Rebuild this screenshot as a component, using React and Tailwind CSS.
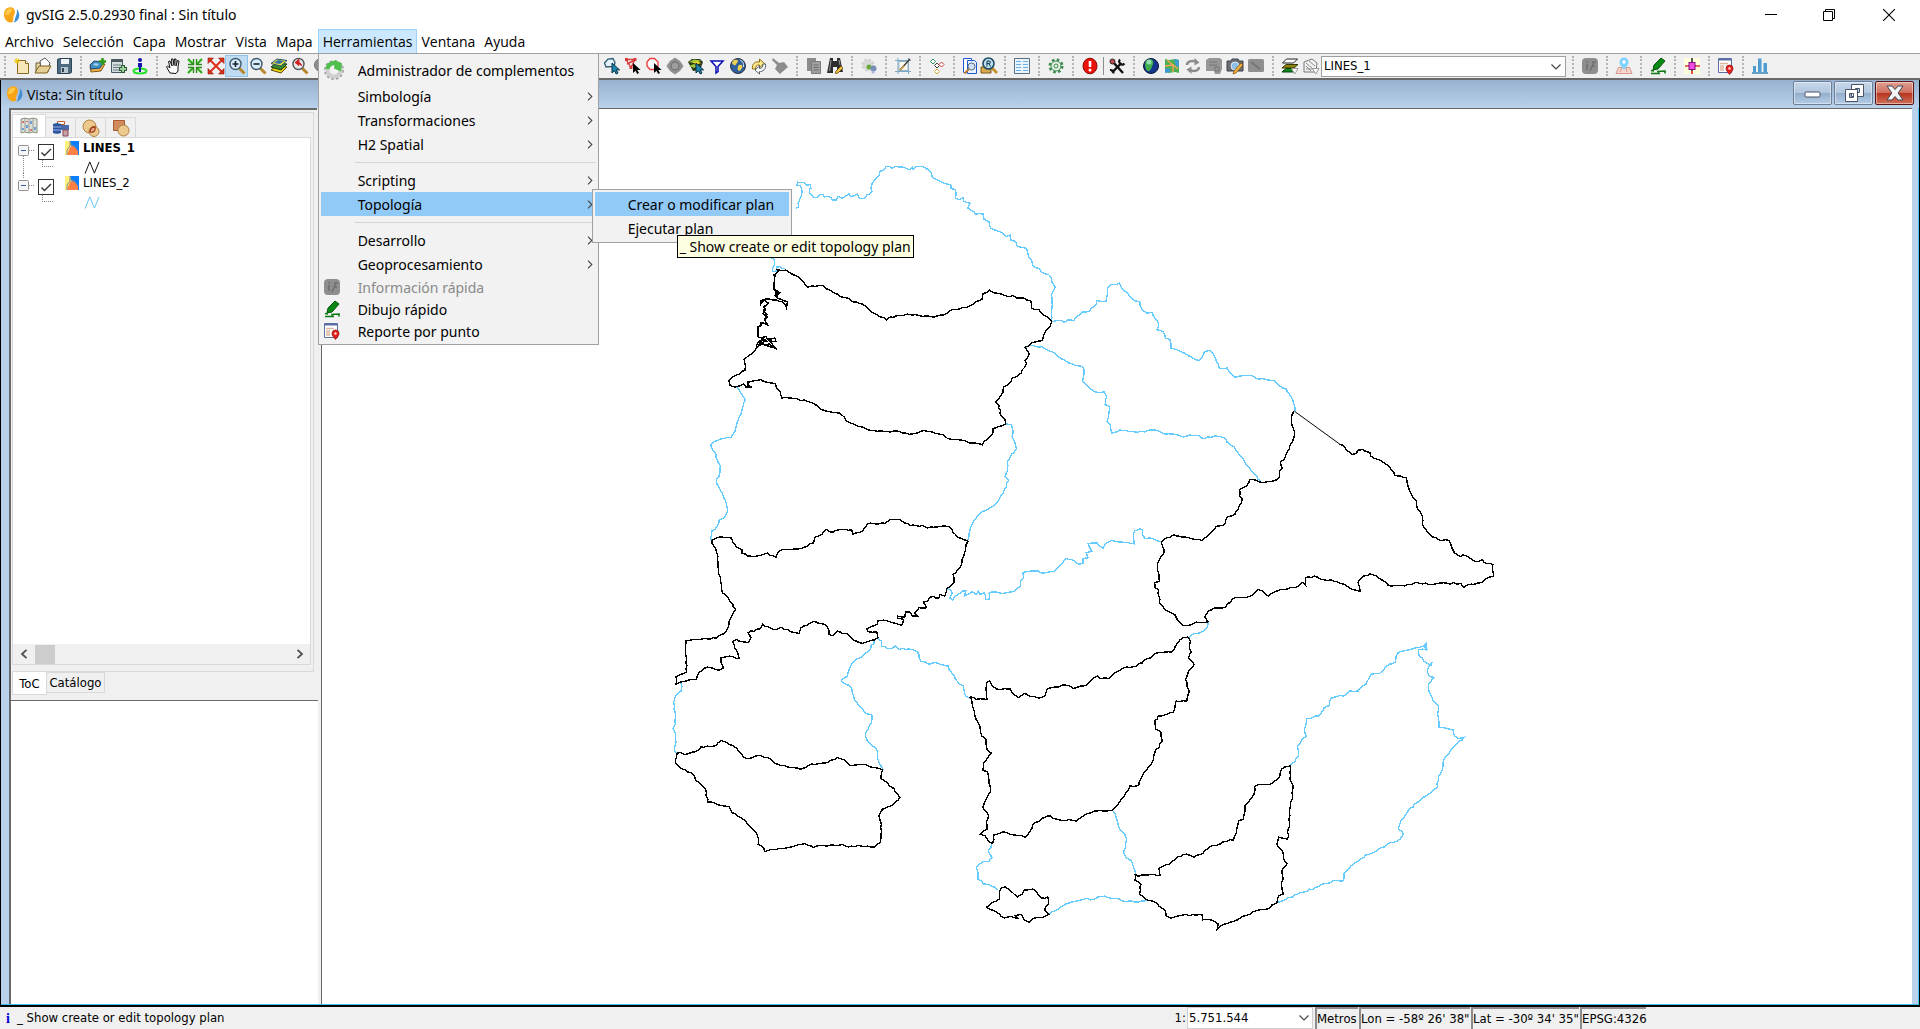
import React from "react";

/* ---------- toolbar icons, drawn on an 18 x 18 grid ---------- */

const Ico = ({ children, className = "h-[18px] w-[18px]", box = "0 0 18 18" }) => (
  <svg viewBox={box} className={className} fill="none" aria-hidden="true">
    {children}
  </svg>
);

const cursor = "M9 6v10l2.500-2.300 1.700 3.300 1.800-1-1.700-3.100h3.300z";

const icons = {
  newDoc: (
    <Ico>
      <path d="M4.500 3.500h8l3 3v10h-11z" fill="#f7e7b8" stroke="#8a6a20" />
      <path d="M12.500 3.500v3h3" stroke="#8a6a20" fill="#fff" />
      <path d="M4 1v6M1 4h6M2 2l4 4M6 2L2 6" stroke="#f0c800" />
    </Ico>
  ),
  open: (
    <Ico>
      <path d="M2 6h5l1-2 6 .5V15H2z" fill="#e8d8a8" stroke="#6b5a30" />
      <path d="M6 4l5-3 5 5-2 6H7z" fill="#fff" stroke="#555" />
      <path d="M1 16l4-7h12l-4 7z" fill="#e6cf92" stroke="#7a6224" />
    </Ico>
  ),
  save: (
    <Ico>
      <path d="M2.500 2.500l2-1h12v14l-2 1h-12z" fill="#4d6b80" stroke="#2c4454" />
      <path d="M6 2h8v5H6z" fill="#eef3f7" />
      <path d="M6 10h7v6H6z" fill="#b8c6d0" />
      <path d="M7 11h2v4H7z" fill="#2c4454" />
    </Ico>
  ),
  addLayer: (
    <Ico>
      <path d="M1 10l4-4 11 1-4 7-10 1z" fill="#e9b04c" stroke="#8a5a10" />
      <path d="M1 8l4-4 10 1-4 6-9 1z" fill="#3f8fc4" stroke="#1c4a78" />
      <path d="M4 8l2-2 4 1-2 2z" fill="#9fd0ee" />
      <path d="M13.500 1v7M10 4.500h7" stroke="#2e9a1c" strokeWidth="2.500" />
    </Ico>
  ),
  addTable: (
    <Ico>
      <path d="M1.500 2.500h11v13h-11z" fill="#d5dde0" stroke="#4a5a60" />
      <path d="M1.500 3.500h11" stroke="#4a5a60" strokeWidth="3" />
      <path d="M3 8h8M3 10.500h8M3 13h8" stroke="#6a7a80" />
      <path d="M13 8v8M9 12h8" stroke="#2c5c34" strokeWidth="4" />
      <path d="M13 9v6M10 12h6" stroke="#9ccf9c" strokeWidth="2" />
    </Ico>
  ),
  locate: (
    <Ico>
      <ellipse cx="9" cy="14" rx="6.500" ry="2.500" stroke="#2be02b" strokeWidth="2" />
      <circle cx="9" cy="3" r="2" fill="#1414a8" />
      <path d="M7 6h4v4h-1v5H8v-5H7z" fill="#1414a8" />
    </Ico>
  ),
  hand: (
    <Ico>
      <path
        d="M5 16l-3.500-6 1-1 2.500 2L3.500 4.500l1.500-.5 2 5-.5-7H8l1 6.500L9.500 2H11v7l1.500-5.500 1.500.5-1 6v4l-2 2.500z"
        fill="#fff"
        stroke="#111"
      />
    </Ico>
  ),
  shrink: (
    <Ico>
      <path d="M2 2l5 5M16 2l-5 5M2 16l5-5M16 16l-5-5" stroke="#2fae1c" strokeWidth="2.200" />
      <path d="M2 7.500h5.500V2M16 7.500h-5.500V2M2 10.500h5.500V16M16 10.500h-5.500V16" stroke="#2a8a1c" strokeWidth="1.400" />
    </Ico>
  ),
  expand: (
    <Ico>
      <path d="M3 3l12 12M15 3L3 15" stroke="#e0301c" strokeWidth="2" />
      <path d="M1 1h5.500L1 6.500zM17 1v5.500L11.500 1zM1 17v-5.500L6.500 17zM17 17h-5.500l5.500-5.500z" fill="#e0301c" stroke="#8a1c10" strokeWidth=".6" />
    </Ico>
  ),
  zoomIn: (
    <Ico>
      <path d="M11 11l5.500 5.500" stroke="#b8862c" strokeWidth="3" />
      <circle cx="7.500" cy="7" r="5.500" fill="#d8ecfa" stroke="#3f5a6e" strokeWidth="1.400" />
      <path d="M7.500 4v6M4.500 7h6" stroke="#123" strokeWidth="1.600" />
    </Ico>
  ),
  zoomOut: (
    <Ico>
      <path d="M11 11l5.500 5.500" stroke="#b8862c" strokeWidth="3" />
      <circle cx="7.500" cy="7" r="5.500" fill="#d8ecfa" stroke="#3f5a6e" strokeWidth="1.400" />
      <path d="M4.500 7h6" stroke="#123" strokeWidth="1.600" />
    </Ico>
  ),
  layers: (
    <Ico>
      <path d="M1 13l5-4 11 1-6 6z" fill="#f0d21c" stroke="#5a4a00" />
      <path d="M1 10l5-4 11 1-6 6z" fill="#3a8a2c" stroke="#12400a" />
      <path d="M1 6.500L7 2l10 1.500-6 5.500z" fill="#f4e23c" stroke="#25506a" />
      <path d="M4 6l4-3 6 1-4 3z" fill="#2f70a8" />
    </Ico>
  ),
  zoomPrev: (
    <Ico>
      <path d="M11 11l5.500 5.500" stroke="#b8862c" strokeWidth="3" />
      <circle cx="7.500" cy="7" r="5.500" fill="#e6e9ec" stroke="#555" strokeWidth="1.400" />
      <path d="M10.500 9c0-3-2-3.500-4-3.500M8 2.500l-4 3 4 3z" stroke="#d02020" fill="#d02020" />
    </Ico>
  ),
  grayBall: (
    <Ico>
      <circle cx="9" cy="8" r="6.500" fill="#8d8d8d" stroke="#777" />
    </Ico>
  ),
  pickBlue: (
    <Ico>
      <path d="M3 10L1.500 6 5 2l5-.5 2 4-1 4z" fill="#e4f2fb" stroke="#2d5a73" strokeWidth="1.300" />
      <path d={cursor} fill="#1b87b5" stroke="#0c2e40" />
    </Ico>
  ),
  pickPoly: (
    <Ico>
      <path d="M2 2.500h9M2 2.500l5 8 4-8M11 3l-8 4" stroke="#d93a3a" strokeWidth="1.400" />
      <path d="M1 1h3v3H1zM9.500 1h3v3h-3zM5.500 9h3v3h-3z" fill="#d93a3a" />
      <path d={cursor} fill="#000" />
    </Ico>
  ),
  pickCircle: (
    <Ico>
      <path d="M5 1.500h4.500L13 5v4l-3 3.500H5L2 9V5z" fill="#fff" stroke="#f04040" strokeWidth="1.400" />
      <path d={cursor} fill="#000" />
    </Ico>
  ),
  diamond: (
    <Ico>
      <path d="M9 .5l5 3.500 3.500 5-3.500 5-5 3.500L4 14 .5 9 4 4z" fill="#8f8f8f" />
      <circle cx="9" cy="9" r="4" stroke="#6f6f6f" fill="#9f9f9f" />
    </Ico>
  ),
  pickLayers: (
    <Ico>
      <path d="M1 5l4-3h8l3 3-3 8-7 1z" fill="#2c3a18" />
      <path d="M2 5l5-2.500 7 1-5 3zM2 9l5-2 4 2-4 2z" fill="#9ac83a" />
      <path d="M6 5.500l4-1.500 4 2-4 1.500z" fill="#f0d21c" />
      <path d={cursor} fill="#1b87b5" stroke="#0c2e40" />
    </Ico>
  ),
  filter: (
    <Ico>
      <path d="M3 4h12l-5 5.500v5L8 16V9.500z" fill="#fff" stroke="#0a0ab8" strokeWidth="1.500" />
    </Ico>
  ),
  globe: (
    <Ico>
      <circle cx="9" cy="9" r="7.500" fill="#2f5f9c" stroke="#2d3440" />
      <path d="M5 3c4-1 5 1 3 3s-1 3-3 2-3-2 0-5zM10 8c3-1 4 1 3 3s-3 4-4 2 0-4 1-5z" fill="#f0d050" />
      <path d="M11 3c3 1 4 4 3.500 7" stroke="#cfe2f5" />
    </Ico>
  ),
  refreshYellow: (
    <Ico>
      <path d="M2.500 12c-1-5 3-8 7-7V2l5 4.500-5 4V8c-2.500-.5-4 1-4 4z" fill="#ffe98a" stroke="#8a6a10" />
      <path d="M15.500 7c1 5-3 8-6 7.500V17L5 13l4.500-4v2.500c2 .3 3.500-1.500 3.500-4.500z" fill="#fff" stroke="#55606a" />
    </Ico>
  ),
  broom: (
    <Ico>
      <path d="M2 1l6 5 5-1 4 5-8 7-5-5 2-4-5-5z" fill="#8d8d8d" />
    </Ico>
  ),
  copyGray: (
    <Ico>
      <path d="M2 1h9v13H2z" fill="#8c8c8c" />
      <path d="M6.500 4.500h9v12h-9z" fill="#a0a0a0" stroke="#7a7a7a" />
      <path d="M8.500 8h5M8.500 10.500h5M8.500 13h5" stroke="#6c6c6c" />
    </Ico>
  ),
  binoculars: (
    <Ico>
      <path d="M4 1h3v3h4V1h3l3 14h-6V10H7v6H1z" fill="#2d2d2d" />
      <path d="M5 3L3.500 14M13 3l1 5" stroke="#9c9c9c" />
      <path d="M15 9l2 2-5 5-2.500.5.5-2.500z" fill="#f0c040" stroke="#5a3a00" strokeWidth=".7" />
    </Ico>
  ),
  gearsPale: (
    <Ico>
      <circle cx="8" cy="8" r="5" stroke="#d0d2d0" strokeWidth="3" strokeDasharray="2.500 1.400" fill="#dadcda" />
      <circle cx="9" cy="10" r="2.500" fill="#6aa83a" />
      <circle cx="13.500" cy="11.500" r="3" fill="#7a8db8" />
      <circle cx="13" cy="15" r="1.500" fill="#a8b8d8" />
    </Ico>
  ),
  editBox: (
    <Ico>
      <path d="M4 1v16M14.500 1v16M1 3.500h16M1 14.500h16" stroke="#7ea8c4" />
      <path d="M5 4.500h9v9H5z" fill="#fdf8ec" stroke="#8fb4cc" />
      <path d="M6 13L16 2" stroke="#3a3220" strokeWidth="1.200" />
      <path d="M6 13l4-4" stroke="#c89a3c" strokeWidth="1.400" />
    </Ico>
  ),
  diamonds: (
    <Ico>
      <g strokeWidth="1" fill="#fff">
        <path d="M5 2l2.500 2.500L5 7 2.500 4.500z" stroke="#2f8f5a" />
        <path d="M9 6l2.500 2.500L9 11 6.500 8.500z" stroke="#444" />
        <path d="M13.500 5l2.500 2.500-2.500 2.500L11 7.500z" stroke="#d04040" />
        <path d="M9 12l2.500 2.500L9 17l-2.500-2.500z" stroke="#d8a830" />
      </g>
    </Ico>
  ),
  docZoom: (
    <Ico>
      <path d="M2.500 1.500h8v14h-8z" fill="#fff" stroke="#1c5ad0" />
      <path d="M6.500 3.500h7l2 2v11h-9z" fill="#e8f0ff" stroke="#1c5ad0" />
      <circle cx="10.500" cy="9.500" r="3.500" fill="#cfe2fa" stroke="#5a6a80" />
      <path d="M8 12l-4.500 4.500" stroke="#c07a2c" strokeWidth="2" />
    </Ico>
  ),
  zoomR: (
    <Ico>
      <path d="M1 10h10v6H1z" fill="#d8a84c" stroke="#7a5a1c" />
      <path d="M12 11l5 5" stroke="#c8922c" strokeWidth="3" />
      <circle cx="8.500" cy="6.500" r="5.500" fill="#bfe0f2" stroke="#1d4a60" strokeWidth="1.600" />
      <path d="M7 9.500V4h2c2 0 2 2.500 0 2.500H7M9 6.500l1.500 3" stroke="#0c3448" />
    </Ico>
  ),
  table: (
    <Ico>
      <path d="M1.500 1.500h15v15h-15z" fill="#eaf4fd" stroke="#5a7080" />
      <path d="M3 4.500h5M3 7.500h5M3 10.500h5M3 13.500h5M10 4.500h5M10 7.500h5M10 10.500h5M10 13.500h5" stroke="#6ab0e8" />
    </Ico>
  ),
  gearGreen: (
    <Ico>
      <circle cx="9" cy="9" r="6.300" stroke="#3d8a4c" strokeWidth="2.400" strokeDasharray="2.600 2.350" />
      <circle cx="9" cy="9" r="5" stroke="#3d8a4c" fill="#e3f0e3" />
      <circle cx="9" cy="9" r="2" stroke="#3d8a4c" />
    </Ico>
  ),
  alert: (
    <Ico>
      <ellipse cx="9" cy="9" rx="7" ry="7.800" fill="#e8140c" stroke="#8c0a06" />
      <path d="M9 4v6" stroke="#fff" strokeWidth="2.600" />
      <circle cx="9" cy="13" r="1.500" fill="#fff" />
    </Ico>
  ),
  tools: (
    <Ico>
      <path d="M5 5l10 11" stroke="#111" strokeWidth="2.400" />
      <path d="M13.500 6L4 15.500" stroke="#111" strokeWidth="2.400" />
      <path d="M12 2.500a3 3 0 0 0 4.500 4M2 13a3 3 0 0 1 3.500 3.500" stroke="#111" strokeWidth="2" />
      <circle cx="4.500" cy="4.500" r="2.500" fill="#c04848" stroke="#222" />
    </Ico>
  ),
  earth: (
    <Ico>
      <circle cx="9" cy="9" r="7.500" fill="#16358c" stroke="#0a1638" />
      <path d="M5 3c5-2 7 1 6 4s-2 6-4 7-4-3-4-6 1-4 2-5z" fill="#3fae4c" />
      <circle cx="7" cy="5" r="2.500" fill="#a8e8c8" opacity=".8" />
    </Ico>
  ),
  mapTile: (
    <Ico>
      <path d="M2 2l4 1 6-1 4 1v13l-4-1-6 1-4-1z" fill="#4cae54" />
      <path d="M11 2l5 1v7l-3-1zM2 11l5 1v3l-5 1z" fill="#3c9cd0" />
      <path d="M4 3l6 5v7M2 9l8-1 5 4" stroke="#f5a75a" strokeWidth="1.400" />
    </Ico>
  ),
  syncGray: (
    <Ico>
      <path d="M3 8c0-3.500 5-5 9-3M15 10c0 3.500-5 5-9 3" stroke="#8c8c8c" strokeWidth="2.400" />
      <path d="M10.500 1l5 4.500-5 3zM7.500 17l-5-4.500 5-3z" fill="#8c8c8c" />
    </Ico>
  ),
  dbGray: (
    <Ico>
      <path d="M1 3l3-2h11l2 2v9l-2 5h-5l-1-3H1z" fill="#979797" />
      <path d="M4 5h8M4 8h8M10 10h4v4h-4z" stroke="#777" />
    </Ico>
  ),
  camera: (
    <Ico>
      <path d="M1 4h4l1-2h6l1 2h4v10H1z" fill="#6a6e74" stroke="#3c4046" />
      <circle cx="9" cy="9" r="4" fill="#8cc0ea" stroke="#dfe6ec" />
      <path d="M15 6l2 2-7 8-3 1 1-3z" fill="#f2b03c" stroke="#7a4a08" strokeWidth=".7" />
    </Ico>
  ),
  screenGray: (
    <Ico>
      <rect x="1" y="2" width="16" height="13" rx="1.500" fill="#8f8f8f" />
      <path d="M4 5l9 7" stroke="#757575" strokeWidth="2" />
    </Ico>
  ),
  stack: (
    <Ico>
      <path d="M1 15l4-3.500h12L13 15z" fill="#0a8c1c" stroke="#053a0a" />
      <path d="M1 11l4-3.500h12L13 11z" fill="#8c8414" stroke="#3a3600" />
      <path d="M1.500 6l4-4h11l-4 4z" fill="#fff" stroke="#222" />
      <path d="M10.500 11.500h6.500l-3.300 5.500z" fill="#fff" stroke="#999" />
    </Ico>
  ),
  tagList: (
    <Ico>
      <path d="M2 5l8-3 5 4-1 9H2z" fill="#f2f2f2" stroke="#777" />
      <path d="M4 6l6 5M7 4l6 5M4 9l5 5M4 12h7" stroke="#8c8c8c" />
      <path d="M10.500 11.500h6.500l-3.300 5.500z" fill="#fff" stroke="#999" />
    </Ico>
  ),
  infoGray: (
    <Ico>
      <rect x="1" y="1" width="16" height="16" rx="4" fill="#8e8e8e" />
      <path d="M6 7v6M6 4v1.500M9 14l4-9M11 5h4M11 9h3" stroke="#707070" strokeWidth="1.600" />
    </Ico>
  ),
  pin: (
    <Ico>
      <path d="M1 16.500l2.500-6h11l2.500 6z" fill="#f6d8d0" stroke="#d8968c" />
      <path d="M5 15l2-4M12 15l-1-4" stroke="#d8968c" />
      <path d="M9 13C6 9 4.500 7.500 4.500 5a4.500 4.500 0 0 1 9 0C13.500 7.500 12 9 9 13z" fill="#7fd4fb" />
      <circle cx="9" cy="5" r="1.800" fill="#fff" />
    </Ico>
  ),
  pen: (
    <Ico>
      <path d="M12 1l4 3-7 8-5 1 1-5z" fill="#0a8a14" stroke="#045408" />
      <path d="M2 13.500l3 .5M2 16.500h8l-1-2 7-.5v2.500" stroke="#0a7a14" strokeWidth="1.600" />
    </Ico>
  ),
  target: (
    <Ico>
      <path d="M1 1h16v16H1z" fill="#ffffdc" />
      <path d="M9 1v13M2 9h14" stroke="#111" strokeWidth="1.400" />
      <path d="M2 9h4M12.500 9H17" stroke="#e06a6a" strokeWidth="2" />
      <path d="M9 14v3" stroke="#e02020" strokeWidth="1.600" />
      <rect x="6" y="5.500" width="6" height="7" fill="#f050e0" stroke="#8c0a80" />
    </Ico>
  ),
  report: (
    <Ico>
      <path d="M1.500 1.500h13v14h-13z" fill="#fff" stroke="#5a6ea8" />
      <path d="M2 2.500h12" stroke="#5a6ea8" strokeWidth="2" />
      <path d="M3 6.500h8M3 9h4M3 11h4M3 13h4" stroke="#dcb8a0" strokeWidth="1.400" />
      <path d="M12.500 17.500c-2.500-3-3.500-4.500-3.500-6a3.500 3.500 0 0 1 7 0c0 1.500-1 3-3.500 6z" fill="#e8201c" stroke="#7a0c0a" strokeWidth=".7" />
      <circle cx="12.500" cy="11.500" r="1.200" fill="#ffd8d0" />
    </Ico>
  ),
  bars: (
    <Ico>
      <path d="M2 9h3v6H2zM7 1.500h3.500V15H7zM12.500 6H16v9h-3.500z" fill="#4f9cd0" />
      <path d="M1 16h16" stroke="#3a86bc" strokeWidth="1.500" />
    </Ico>
  ),
};

const toolGroups = [
  { tools: ["newDoc", "open", "save"] },
  { tools: ["addLayer", "addTable", "locate"] },
  { tools: ["hand", "shrink", "expand", "zoomIn", "zoomOut", "layers", "zoomPrev", "grayBall", "globe"], active: "zoomIn" },
  { tools: ["zoomR", "docZoom", "table"] },
  { tools: ["layers", "copyGray"] },
  {
    tools: [
      "pin", "mapTile", "editBox", "camera", "pickCircle",
      "pickBlue", "pickPoly", "pickCircle", "diamond", "pickLayers", "filter", "globe", "refreshYellow", "broom",
    ],
  },
  { tools: ["copyGray", "binoculars"] },
  { tools: ["gearsPale"] },
  { tools: ["editBox"] },
  { tools: ["diamonds"] },
  { tools: ["docZoom", "zoomR"], tight: true },
  { tools: ["table"] },
  { tools: ["gearGreen"] },
  { tools: ["alert", "|", "tools"] },
  { tools: ["earth", "mapTile", "syncGray", "dbGray", "camera", "screenGray"] },
  { tools: ["stack", "tagList"], combo: true },
  { tools: ["infoGray"] },
  { tools: ["pin"] },
  { tools: ["pen"] },
  { tools: ["target"] },
  { tools: ["report"] },
  { tools: ["bars"] },
];

const Chevron = ({ className }) => (
  <svg viewBox="0 0 10 6" className={className} fill="none" aria-hidden="true">
    <path d="M.5.5L5 5l4.500-4.500" stroke="#444" strokeWidth="1.200" />
  </svg>
);

function Toolbar() {
  return (
    <div className="-ml-0.5 flex h-[27px] shrink-0 items-center border-t border-b-2 border-t-[#a0a0a0] border-b-[#696969] bg-[#f0f0f0]">
      {toolGroups.map((g, i) => (
        <div key={i} className="flex h-full shrink-0 items-center">
          <span className="flex w-[13px] justify-center">
            <span className="h-[20px] border-l-2 border-dotted border-[#b4b4b4]" />
          </span>
          {g.tools.map((t, j) =>
            t === "|" ? (
              <span key={j} className="flex w-[6px] justify-center">
                <span className="h-[18px] border-l border-[#8c8c8c]" />
              </span>
            ) : (
              <button
                key={j}
                type="button"
                aria-label={t}
                className={
                  "flex h-[20px] items-center justify-center " +
                  (g.tight ? "w-[19px] " : "w-[21px] ") +
                  (g.active === t ? "bg-[#bfdcf3] outline outline-[#8fc3ee]" : "")
                }
              >
                {icons[t]}
              </button>
            )
          )}
          {g.combo && (
            <div className="relative">
              <select
                aria-label="Capa activa"
                className="block h-[21px] w-[245px] appearance-none border border-[#a0a0a0] bg-white pl-0.5 font-['DejaVu_Sans_Condensed','DejaVu_Sans',sans-serif] text-[13px] leading-[18px] text-black"
              >
                <option>LINES_1</option>
                <option>LINES_2</option>
              </select>
              <Chevron className="pointer-events-none absolute top-[8px] right-[5px] h-[6px] w-[10px]" />
            </div>
          )}
        </div>
      ))}
    </div>
  );
}

/* ---------- application logo ---------- */

const Logo = () => (
  <Ico className="h-[18px] w-[18px] shrink-0">
    <path d="M9 1.500C4 .5 1 4 1 8.500S4 17 8.500 16.500c3-1 1-3.500 2-6s2-4 1-6.500c-.5-1.500-1.500-2.200-2.500-2.500z" fill="#f7a516" />
    <path d="M6 2.500C3.500 3.500 2 6 2.300 9c3 .5 6-1.500 7-6.200z" fill="#ffc84a" />
    <path d="M13.500 3c2.500 2 3.500 5.500 2.500 8.500s-3 4.500-5.500 5c2-2 1.200-3.500 2-5.500.8-2.300 2.200-4.500 1-8z" fill="#3f8fd8" />
  </Ico>
);

/* ---------- menus ---------- */

const menuNames = ["Archivo", "Selección", "Capa", "Mostrar", "Vista", "Mapa", "Herramientas", "Ventana", "Ayuda"];

const GearBig = () => (
  <svg viewBox="0 0 22 22" className="h-[22px] w-[22px]" fill="none" aria-hidden="true">
    <circle cx="11" cy="11" r="8.500" stroke="#a4a4a4" strokeWidth="3" strokeDasharray="2.600 1.850" />
    <circle cx="11" cy="11" r="6.500" stroke="#cfcfcf" strokeWidth="4" />
    <path d="M4.500 10a6.500 6.500 0 0 1 9-5.500" stroke="#4fc04a" strokeWidth="4" />
    <path d="M12 1l7 3.500-1 8-7-3z" fill="#4fc04a" />
  </svg>
);

const toolsMenu = [
  { label: "Administrador de complementos", icon: <GearBig />, size: "h-[28px]" },
  { label: "Simbología", sub: true },
  { label: "Transformaciones", sub: true },
  { label: "H2 Spatial", sub: true },
  null,
  { label: "Scripting", sub: true },
  { label: "Topología", sub: true, open: true },
  null,
  { label: "Desarrollo", sub: true },
  { label: "Geoprocesamiento", sub: true },
  { label: "Información rápida", icon: icons.infoGray, size: "h-[22px]", disabled: true },
  { label: "Dibujo rápido", icon: icons.pen, size: "h-[22px]" },
  { label: "Reporte por punto", icon: icons.report, size: "h-[22px]" },
];

function SubMenu() {
  return (
    <div className="absolute top-[-3px] left-[271px] z-20 w-[200px] border border-[#a0a0a0] bg-[#f2f2f2] p-0.5">
      <button type="button" className="flex h-[24px] w-full items-center bg-[#91c9f7] pl-[33px]">
        Crear o modificar plan
      </button>
      <button type="button" className="flex h-[24px] w-full items-center pl-[33px]">
        Ejecutar plan
      </button>
      <div
        role="tooltip"
        className="absolute top-[45px] left-[84px] flex h-[23px] items-center border border-black bg-[#ffffe1] px-0.5 whitespace-nowrap"
      >
        _ Show create or edit topology plan
      </div>
    </div>
  );
}

function ToolsMenu() {
  return (
    <div className="absolute top-full left-0 z-10 w-[281px] border border-[#a0a0a0] bg-[#f2f2f2] p-0.5 text-left font-['Noto_Sans','Open_Sans',sans-serif]">
      {toolsMenu.map((m, i) =>
        m === null ? (
          <div key={i} className="flex h-[12px] items-center pl-[34px]">
            <span className="w-full border-t border-[#d5d5d5]" />
          </div>
        ) : (
          <div key={i} className="relative">
            <button
              type="button"
              disabled={m.disabled}
              className={
                "flex w-full items-center " +
                (m.size || "h-[24px]") +
                (m.open ? " bg-[#91c9f7]" : "") +
                (m.disabled ? " text-[#8a8a8a]" : "")
              }
            >
              <span className="flex w-[37px] shrink-0 pl-0.5">{m.icon}</span>
              <span className="flex-1 text-left">{m.label}</span>
              {m.sub && (
                <svg viewBox="0 0 6 10" className="mr-[3px] h-[9px] w-[6px]" fill="none" aria-hidden="true">
                  <path d="M.8.8L5 5 .8 9.200" stroke="#444" strokeWidth="1.200" />
                </svg>
              )}
            </button>
            {m.open && <SubMenu />}
          </div>
        )
      )}
    </div>
  );
}

function MenuBar() {
  return (
    <nav className="flex h-[24px] shrink-0 bg-white pl-px">
      {menuNames.map((name) => (
        <div key={name} className={name === "Herramientas" ? "relative" : ""}>
          <button
            type="button"
            className={
              "h-[24px] px-1 " +
              (name === "Herramientas" ? "border border-b-0 border-[#99d1ff] bg-[#cce8ff]" : "mr-px")
            }
          >
            {name}
          </button>
          {name === "Herramientas" && <ToolsMenu />}
        </div>
      ))}
    </nav>
  );
}

/* ---------- table of contents ---------- */

const tocTabs = [
  <Ico key="map">
    <path d="M1 2l4-1 4 1 4-1 4 1v14l-4-1-4 1-4-1-4 1z" fill="#dde3d6" stroke="#8a9080" />
    <path d="M5 1v14M9 2v14M13 1v14" stroke="#999" />
    <path d="M3 4v2M11 12v2M7 4v1" stroke="#d05050" strokeWidth="1.500" />
    <path d="M7 8v3M15 10v3M11 4v3M3 11v2" stroke="#4f88d8" strokeWidth="1.500" />
  </Ico>,
  <Ico key="db">
    <path d="M5.500 2.500h7v3h-7z" fill="#fff" stroke="#c05a30" />
    <path d="M1 5c2-1 6-1 8 0v9c-2 1-6 1-8 0z" fill="#2d55a0" />
    <path d="M1 8h8M1 11h8" stroke="#9ab4e0" />
    <path d="M9 6h8v5H9z" fill="#4a6aa8" />
    <path d="M11 11h5v6h-5z" fill="#c8a0a8" stroke="#8a4a5a" />
  </Ico>,
  <Ico key="circles">
    <circle cx="7.500" cy="7.500" r="6.500" fill="#ecc98c" stroke="#b08040" />
    <circle cx="12" cy="12.500" r="5" fill="#ecc98c" stroke="#b08040" />
    <path d="M8 13c0-3 2-5 5-5 1 3-1 6-5 5z" fill="#f0b090" stroke="#a03c1c" strokeWidth="1.300" />
  </Ico>,
  <Ico key="shapes">
    <path d="M1.500 1.500h11v10h-11z" fill="#d08a5c" stroke="#a85a2c" />
    <circle cx="11.500" cy="11.500" r="5.500" fill="#ecc98c" stroke="#b08040" />
  </Ico>,
];

const layers = [
  { name: "LINES_1", stroke: "#000000", active: true },
  { name: "LINES_2", stroke: "#5cc4f8" },
];

function LayerRow({ layer, last }) {
  return (
    <li className="flex h-[35px] pl-px">
      <button type="button" aria-label={"Contraer " + layer.name} className="h-[35px] w-[23px]">
        <svg viewBox="0 0 23 35" className="h-[35px] w-[23px]" fill="none" aria-hidden="true">
          <path d={last ? "M8.500 0v6M14 12.500h6" : "M8.500 18v17M14 12.500h6"} stroke="#888" strokeDasharray="1 1" />
          <rect x="3.500" y="7.500" width="10" height="10" rx="1" fill="#f6f6f6" stroke="#919191" />
          <path d="M6 12.500h5" stroke="#3c5aa8" />
        </svg>
      </button>
      <div className="relative w-[27px] pt-[6px]">
        <input
          type="checkbox"
          id={layer.name}
          defaultChecked
          className="block h-[16px] w-[16px] appearance-none border border-[#333] bg-white"
        />
        <svg viewBox="0 0 16 16" className="pointer-events-none absolute top-[6px] left-0 h-[16px] w-[16px]" fill="none" aria-hidden="true">
          <path d="M3.500 8.500l3 3L13 5" stroke="#333" strokeWidth="1.400" />
        </svg>
        <span className="ml-1 block h-[7px] w-[11px] border-b border-l border-dotted border-[#888]" />
      </div>
      <svg viewBox="0 0 14 14" className="mt-[3px] mr-1 h-[14px] w-[14px]" aria-hidden="true">
        <path d="M0 0h14v14H0z" fill="#fff27a" />
        <path d="M5 0h9v14H9z" fill="#0a80ff" />
        <path d="M5 6l4-1 4 5v4H2z" fill="#ff7f45" />
        <path d="M5 0v5l-3 4v5M5 3l5 3" stroke="#888" fill="none" />
      </svg>
      <div>
        <label
          htmlFor={layer.name}
          className={
            "block h-[20px] font-['DejaVu_Sans_Condensed','DejaVu_Sans',sans-serif] text-[13px] leading-[19px] " +
            (layer.active ? "font-bold" : "")
          }
        >
          {layer.name}
        </label>
        <svg viewBox="0 0 18 14" className="mt-[3px] ml-px h-[13px] w-[18px]" fill="none" aria-hidden="true">
          <path d="M.5 13.500L5.500 1l5 12 5-12" stroke={layer.stroke} />
        </svg>
      </div>
    </li>
  );
}

function SidePanel() {
  return (
    <aside className="flex w-[310px] shrink-0 flex-col bg-[#f0f0f0]">
      <div className="flex h-[589px] w-[306px] flex-col border-t-2 border-[#696969] pt-0.5">
        <div className="ml-px flex min-h-0 w-[302px] flex-1 flex-col border-t border-r border-b border-[#d9d9d9]">
          <div className="flex items-end pt-px">
            {tocTabs.map((t, i) => (
              <button
                key={i}
                type="button"
                aria-label={"Panel " + (i + 1)}
                className={
                  i === 0
                    ? "flex h-[23px] w-[34px] items-center justify-center border border-b-0 border-[#d9d9d9] bg-white"
                    : "flex h-[20px] w-[30px] items-center justify-center border border-l-0 border-b-0 border-[#d9d9d9] bg-[#f0f0f0]"
                }
              >
                {t}
              </button>
            ))}
          </div>
          <div className="mb-[6px] flex w-[299px] flex-1 flex-col border border-[#d9d9d9] bg-white">
            <ul className="flex-1 pl-px">
              {layers.map((l, i) => (
                <LayerRow key={l.name} layer={l} last={i === layers.length - 1} />
              ))}
            </ul>
            <div className="flex h-[20px] items-center bg-[#f0f0f0]">
              <button type="button" aria-label="Izquierda" className="flex w-[22px] justify-center">
                <svg viewBox="0 0 8 10" className="h-[10px] w-[8px]" fill="none">
                  <path d="M6.500.8L2 5l4.500 4.200" stroke="#505050" strokeWidth="1.800" />
                </svg>
              </button>
              <span className="h-[19px] w-[20px] bg-[#cdcdcd]" />
              <span className="flex-1" />
              <button type="button" aria-label="Derecha" className="flex w-[21px] justify-center">
                <svg viewBox="0 0 8 10" className="h-[10px] w-[8px]" fill="none">
                  <path d="M1.500.8L6 5 1.500 9.200" stroke="#505050" strokeWidth="1.800" />
                </svg>
              </button>
            </div>
          </div>
        </div>
        <div className="flex h-[25px] shrink-0 items-start pl-px font-['DejaVu_Sans_Condensed','DejaVu_Sans',sans-serif] text-[13px]">
          <button type="button" className="h-[23px] w-[35px] border border-t-0 border-[#d9d9d9] bg-white pt-[2px]">
            ToC
          </button>
          <button type="button" className="h-[21px] w-[58px] border border-l-0 border-[#d9d9d9]">
            Catálogo
          </button>
        </div>
      </div>
      <div className="mt-[3px] w-[307px] flex-1 border-t border-[#696969] bg-white" />
    </aside>
  );
}

/* ---------- map ---------- */

/* Survey sheets: origin and scale of the digitised coordinates. */
const sheets = {
  nw: [660, 150, 1 / 3, 1 / 3],
  ne: [950, 260, 1 / 2.8, 1 / 3],
  sw: [660, 450, 1 / 3, 1 / 3],
  se: [940, 600, 1 / 2.8, 1 / 3],
};

const water = [
  ["nw", "405,175 413,172 416,150 424,125 419,108 408,105 411,97 430,97 437,106 448,104 450,115 446,118 447,130 460,142 470,142 478,134 488,134 490,141 510,143 514,150 527,150 532,139 543,145 553,140 565,131 570,140 578,138 590,132 596,146 612,145 618,135 634,125 632,105 640,92 655,78 657,65 672,58 675,50 686,49 692,55 703,50 720,51 745,60 755,52 757,58 768,49 782,49 800,58 812,70 815,83 835,92 850,100 872,106 870,115 885,120 885,145 895,150 907,143 910,155 928,160 922,175 940,185 945,193 968,193 970,208 985,215 990,235 1010,243 1025,248 1035,260 1048,256 1050,270 1065,275 1070,290 1098,296 1100,305 1105,322 1113,330 1118,350 1137,356 1143,367 1165,375 1172,385 1175,400 1184,410 1177,425 1174,445 1174,475 1172,512"],
  ["nw", "328,322 338,327 340,345 335,355 336,365 345,366 347,352 358,350 362,356 372,356"],
  ["nw", "225,712 240,730 253,750 247,768 240,795 228,820 222,845 210,863 180,868 160,876 149,887 155,900"],
  ["sw", "152,0 165,15 170,35 178,50 177,70 166,90 172,110 180,125 192,150 197,165 200,185 190,205 175,212 168,230 152,245 150,272"],
  ["ne", "284,186 300,182 318,187 330,180 345,182 355,168 370,156 390,154 392,146 408,135 410,122 420,125 435,126 438,110 440,85 450,74 465,75 472,70 480,85 495,100 515,122 530,127 537,150 550,160 565,158 572,175 582,190 578,210 595,215 603,235 615,240 618,265 640,272 665,288 695,302 705,292 712,275 725,272 740,290 745,305 753,325 775,325 780,335 797,353 820,348 840,347 865,358 905,362 915,373 940,388 950,405 960,425 965,453"],
  ["ne", "210,264 230,257 255,261 285,277 310,297 330,310 355,318 370,320 374,340 370,365 385,380 405,397 430,397 437,410 433,435 445,440 443,465 438,485 448,495 452,520 475,511 500,516 525,518 560,511 578,512 600,524 640,527 652,532 670,526 695,527 710,537 740,529 770,536 775,548 795,562 815,592 825,610 845,635 868,664"],
  ["ne", "155,493 170,495 174,510 172,530 182,555 184,568 170,585 160,605 160,630 153,650 162,662 157,680 150,690 138,715 125,733 105,750 85,758 70,778 60,795 52,820 47,845"],
  ["sw", "860,418 875,430 867,445 875,452 883,440 905,425 915,425 912,440 922,435 935,427 948,435 953,425 958,435 970,430 975,450 985,450 985,430"],
  ["ne", "107,1000 155,1000 180,994 195,980 195,965 205,955 202,940 235,935 265,940 290,935 310,915 322,897 340,900 355,913 372,910 370,897 385,895 380,880 395,875 388,860 385,852 410,850 418,860 428,867 432,855 450,843 470,847 495,848 515,853 513,840 515,815 530,808 538,812 538,825 545,838 560,835 575,842 592,846"],
  ["ne", "722,1087 720,1103 708,1115 685,1122 668,1133"],
  ["sw", "60,700 60,725 42,745 38,760 43,790 43,825 36,837 43,850 45,880 40,905 47,910"],
  ["sw", "652,568 662,575 663,592 690,598 705,590 715,600 745,599 770,607 780,635 805,645 820,640 840,645 862,650 873,670 885,690 908,710 915,740 930,747"],
  ["sw", "640,572 630,598 612,612 600,625 580,635 568,655 560,680 541,692 555,705 572,715 578,740 595,770 615,792 633,797 632,820 615,850 620,875 650,905 655,940 668,962"],
  ["se", "143,735 133,755 143,775 135,787 120,787 100,805 105,825 105,840 120,855 145,862 160,872"],
  ["se", "305,946 335,925 370,908 410,897 420,902 450,892 490,898 520,907 545,909 583,905"],
  ["se", "483,635 495,665 502,690 520,715 518,745 512,760 520,775 535,785 543,810 547,825"],
  ["se", "980,497 993,487 1003,470 1000,440 1025,410 1020,390 1025,358 1060,350 1075,325 1090,318 1093,298 1110,292 1130,290 1145,275 1170,275 1192,255 1205,225 1230,222 1250,200 1275,188 1280,162 1310,152 1345,143 1360,133 1360,148 1354,140 1362,150 1340,150 1342,170 1360,190 1375,197 1378,188 1365,210 1370,230 1382,235 1368,255 1370,280 1380,305 1395,320 1395,355 1397,385 1437,392 1440,410 1452,418 1468,414 1440,440 1418,470 1408,490 1405,515 1395,530 1393,565 1360,590 1335,610 1310,635 1290,665 1283,690 1297,705 1288,720 1250,737 1200,765 1150,800 1130,825 1127,847 1100,845 1050,865 1000,885 943,910"],
];

const borders = [
  ["nw", "348,358 358,362 375,361 385,368 400,376 412,380 418,388 430,400 440,412 465,410 485,407 497,417 515,427 540,441 565,446 577,457 605,463 625,480 633,488 655,500 668,503 677,510 688,502 715,497 740,493 765,495 785,500 800,498 820,502 850,495 868,482 890,480 905,473 925,470 940,461 965,447 967,432 980,427 987,421 1005,430 1030,436 1045,441 1058,437 1068,445 1090,445 1097,450 1110,453 1112,475 1135,480 1142,490 1158,500 1173,514 1170,527 1158,540 1150,555 1145,572 1130,575 1113,580 1105,588 1093,593 1100,602 1106,612 1098,628 1092,632 1098,640 1092,653 1085,660 1082,670 1068,680 1052,687 1052,695 1045,702 1028,712 1027,728 1020,738 1015,748 1006,757 1016,768 1014,775 1020,780 1018,792 1033,808 1035,823 1010,832 997,838 997,850 987,862 982,868 970,875 965,886 955,882 925,880 905,872 880,870 860,866 848,856 835,853 820,850 790,842 770,850 745,854 725,850 715,845 690,847 670,845 630,843 610,835 575,822 563,818 550,802 535,790 505,786 480,778 455,760 440,755 410,748 385,745 363,745 358,725 348,715 342,701 320,698 300,690 290,692 270,696 260,697 262,708 272,712 255,712 248,703 222,712 208,708 204,692 212,684 235,673 252,662 250,630 260,620 275,610 285,598 292,588 300,575 312,585 325,583 348,598 322,572 345,575 342,565 320,568 315,560 292,562 292,530 300,528 300,520 318,522 310,510 318,495 308,485 312,470 324,460 310,452 300,463 300,452 315,448 345,450 365,455 377,475 380,455 350,446 342,437 355,432 348,422 338,418 342,400 340,385 345,372 352,365 348,358"],
  ["nw", "286,592 298,572 310,574 292,590 304,566 318,574 300,580 330,592 346,596"],
  ["nw", "294,556 292,530 298,528 306,518 320,526 312,512 320,500 306,492 314,478 308,470 322,462"],
  ["nw", "338,372 340,410 346,436 356,428 344,424 350,444"],
  ["ne", "1090,553 1125,584 1138,582 1140,572 1155,570 1175,578 1178,590 1200,600 1225,617 1245,647 1278,655 1280,670 1290,700 1305,725 1310,750 1322,770 1322,795 1335,815 1350,832 1370,842 1397,843 1405,865 1412,880 1430,892 1435,885 1450,892 1478,907 1490,900 1495,908 1520,915 1518,925 1522,950 1500,958 1485,970 1450,975 1438,984 1430,972 1380,970 1340,975 1305,968 1290,976 1235,980 1210,962 1195,950 1175,943 1152,955 1142,970 1148,996 1125,990 1105,975 1075,965 1045,960 1020,950 995,955 995,977 985,968 970,983 945,988 925,990 910,997 890,1010 875,995 862,990 845,1008 820,1014 790,1018 770,1043 740,1045 722,1055 712,1073 722,1087 690,1088 670,1097 650,1098 635,1080 628,1065 600,1050 585,1030 583,990 573,985 572,970 585,965 580,925 585,900 598,880 590,848 598,840 615,833 625,826 650,833 675,837 705,843 725,825 745,800 765,797 775,772 797,765 808,740 817,718 810,710 810,690 830,678 838,660 850,660 870,668 905,664 922,652 922,635 930,625 925,605 935,600 945,575 960,540 963,515 955,485 957,465 962,455"],
  ["sw", "152,272 168,265 190,264 212,266 217,280 228,293 243,300 243,312 270,320 300,317 320,311 345,324 355,304 390,300 420,297 440,290 458,280 463,263 483,255 497,240 515,248 545,240 572,240 577,254 605,245 620,222 672,221 690,209 718,209 748,229 785,228 800,235 830,232 865,231 890,264 922,275 915,300 910,318 900,352 877,375 880,400 858,418 852,440 838,435 835,445 808,443 800,455 788,458 797,475 775,475 762,490 770,500 755,500 748,488 735,487 732,503 712,500 710,508 728,510 722,528 695,520 670,512 650,515 650,525 618,538 622,547 648,548 652,565 630,573 605,582 580,572 565,557 530,545 515,559 505,555 498,530 462,516 440,527 420,535 415,552 390,547 360,533 340,541 305,524 298,538 268,545 262,550 270,565 262,580 225,570 215,577 235,627 205,620 180,625 180,640 188,655 175,662 140,653 115,668 105,690 75,695 45,705 45,682 60,675 77,667 75,620 75,575 100,570 165,566 190,553 203,530 205,515 224,480 203,447 185,430 178,395 172,340 165,300 152,272"],
  ["sw", "48,912 80,914 105,907 120,893 165,888 182,874 205,885 225,895 235,907 255,928 290,919 320,925 350,945 385,955 420,960 445,947 500,940 530,925 550,932 567,948 603,945 625,952 665,962 660,987 680,1002 700,1018 717,1045 690,1070 665,1080 655,1100 662,1125 662,1145 658,1180 640,1194 600,1190 555,1191 545,1186 500,1190 480,1188 458,1195 433,1183 400,1191 355,1198 312,1207 308,1195 292,1185 290,1160 270,1135 240,1105 212,1090 205,1073 140,1058 135,1022 105,993 90,970 60,958 43,940 48,912"],
  ["se", "82,293 100,300 130,300 128,250 137,245 145,262 160,270 195,269 205,285 218,295 235,282 250,292 275,296 292,290 297,270 320,263 350,257 372,267 410,257 425,240 440,230 448,238 472,238 490,220 520,203 550,200 570,183 610,160 648,158 665,130 680,115 693,113 700,125 697,140 702,158 695,175 710,195 698,210 695,215 686,240 697,275 690,305 660,305 652,340 610,350 600,365 603,390 618,400 621,425 600,460 592,490 575,515 560,540 555,558 530,560 515,590 500,610 483,632 430,636 400,650 380,665 360,660 340,664 300,650 265,670 250,697 237,714 205,707 175,698 148,708 145,733 135,727 125,710 110,705 130,690 128,670 135,650 118,625 125,605 140,575 135,540 130,517 118,513 120,490 142,462 130,450 128,420 115,410 105,370 95,340 88,310 82,293"],
  ["se", "165,875 180,863 195,875 215,893 228,885 235,873 258,870 275,890 283,897 300,893 303,905 292,935 303,946 285,955 262,957 247,970 235,962 225,945 210,950 215,957 190,953 178,957 155,938 128,924 145,910 165,900 165,875"],
  ["se", "545,825 555,832 580,828 615,828 612,808 640,795 665,773 690,765 710,775 735,762 760,740 775,738 790,728 820,722 830,690 835,665 848,660 853,620 865,605 878,585 880,562 900,555 925,555 945,540 955,510 965,503 980,500 978,540 988,560 985,600 980,610 978,680 972,720 948,714 942,735 957,755 960,775 972,793 958,810 957,870 960,885 947,890 943,910 915,930 885,935 840,957 795,975 775,990 778,975 760,963 735,962 733,948 690,947 645,957 632,950 630,935 605,912 580,903 557,885 562,855 545,843 545,825"],
];

/* Turns a digitised line into a path, adding small bends between its vertices. */
function trace([sheet, text]) {
  const [ox, oy, sx, sy] = sheets[sheet];
  const pts = text.split(" ").map((p) => {
    const [x, y] = p.split(",").map(Number);
    return [ox + x * sx, oy + y * sy];
  });
  let seed = text.length;
  const next = () => {
    seed = (seed * 16807) % 2147483647;
    return seed / 2147483647 - 0.5;
  };
  let d = "M" + pts[0].map((v) => v.toFixed(1)).join(" ");
  for (let i = 1; i < pts.length; i++) {
    const [ax, ay] = pts[i - 1];
    const [bx, by] = pts[i];
    const len = Math.hypot(bx - ax, by - ay);
    const n = Math.floor(len / 3);
    for (let k = 1; k < n; k++) {
      const t = k / n;
      const off = next() * 1.8;
      const x = ax + (bx - ax) * t - ((by - ay) / len) * off;
      const y = ay + (by - ay) * t + ((bx - ax) / len) * off;
      d += "L" + x.toFixed(1) + " " + y.toFixed(1);
    }
    d += "L" + bx.toFixed(1) + " " + by.toFixed(1);
  }
  return d;
}

function MapView() {
  return (
    <div className="min-w-0 flex-1 border-t border-l border-[#696969] bg-white">
      <svg
        viewBox="322 109 1589 896"
        className="h-full w-full"
        fill="none"
        shapeRendering="crispEdges"
        strokeWidth="1.400"
        role="img"
        aria-label="Mapa"
      >
        <g stroke="#66ccff">
          {water.map((w, i) => (
            <path key={i} d={trace(w)} />
          ))}
        </g>
        <g stroke="#000">
          {borders.map((b, i) => (
            <path key={i} d={trace(b)} />
          ))}
          <path d="M1294 411.500L1339.500 444.500" strokeWidth="1" shapeRendering="auto" />
        </g>
      </svg>
    </div>
  );
}

/* ---------- inner window ---------- */

function FrameButton({ label, danger, children }) {
  return (
    <button
      type="button"
      aria-label={label}
      className={
        "flex h-[24px] w-[39px] items-center justify-center rounded-xs border shadow-[inset_0_0_0_1px_rgba(255,255,255,0.45)] " +
        (danger
          ? "border-[#5a1410] bg-[linear-gradient(#e0a093_0%,#cf7060_48%,#b8341e_50%,#d07058_100%)]"
          : "border-[#6d7f96] bg-[linear-gradient(#c8d8ea_0%,#b2c6de_48%,#94aeca_50%,#b4cce6_100%)]")
      }
    >
      {children}
    </button>
  );
}

function InnerWindow() {
  return (
    <section className="flex min-h-0 flex-1 flex-col border-x border-b-2 border-black bg-[#b9d1ea]">
      <header className="flex h-[28px] shrink-0 items-center bg-[linear-gradient(#97b1cf,#b9d1ea)] pr-[5px] pl-[5px]">
        <Logo />
        <h2 className="ml-[3px] flex-1">Vista: Sin título</h2>
        <div className="flex gap-0.5 pb-[3px]">
          <FrameButton label="Minimizar vista">
            <svg viewBox="0 0 18 8" className="mt-1 h-[8px] w-[18px]" aria-hidden="true">
              <rect x="1" y="1" width="15" height="5" rx="1" fill="#fff" stroke="#4a5568" />
            </svg>
          </FrameButton>
          <FrameButton label="Restaurar vista">
            <svg viewBox="0 0 22 20" className="h-[20px] w-[22px]" aria-hidden="true">
              <path d="M8.500 1.500h12v12h-12zM12.500 5.500h4v4h-4z" fill="#fff" fillRule="evenodd" stroke="#4a5568" />
              <path d="M2.500 6.500h12v12h-12zM6.500 10.500h4v4h-4z" fill="#fff" fillRule="evenodd" stroke="#4a5568" />
            </svg>
          </FrameButton>
          <FrameButton label="Cerrar vista" danger>
            <svg viewBox="0 0 18 16" className="h-[16px] w-[18px]" aria-hidden="true">
              <path d="M1 1h5l3 3.500L12 1h5l-4.800 7L17 15h-5l-3-3.500L6 15H1l4.800-7z" fill="#f4f4f4" stroke="#3f4657" strokeLinejoin="round" />
            </svg>
          </FrameButton>
        </div>
      </header>
      <div className="flex min-h-0 flex-1 border-r border-b border-[#3cc4ee] pr-[6px] pl-[8px]">
        <div className="flex min-w-0 flex-1 border-l-2 border-[#696969]">
          <SidePanel />
          <MapView />
        </div>
      </div>
    </section>
  );
}

/* ---------- status bar ---------- */

function StatusBar() {
  const cell = "flex h-[22px] items-center border-t-2 border-l-2 border-[#8c8c8c] whitespace-nowrap";
  return (
    <footer className="flex h-[22px] shrink-0 items-center bg-[#f0f0f0] pr-[274px] font-['DejaVu_Sans_Condensed','DejaVu_Sans',sans-serif] text-[13px] text-black">
      <span className="w-[17px] pl-[6px] font-['Liberation_Serif',serif] text-[14px] font-bold text-[#0000e0]">i</span>
      <span className="flex-1">_ Show create or edit topology plan</span>
      <label htmlFor="scale" className="pr-px">1:</label>
      <div className="relative">
        <select id="scale" className="block h-[22px] w-[126px] appearance-none border border-[#d0d0d0] bg-white pl-px">
          <option>5.751.544</option>
        </select>
        <Chevron className="pointer-events-none absolute top-[8px] right-[4px] h-[6px] w-[10px]" />
      </div>
      <span className={cell + " ml-0.5 w-[43px]"}>Metros</span>
      <span className={cell + " ml-px w-[111px]"}>Lon = -58º 26' 38"</span>
      <span className={cell + " ml-px w-[108px]"}>Lat = -30º 34' 35"</span>
      <span className={cell + " ml-px w-[66px]"}>EPSG:4326</span>
    </footer>
  );
}

export default function App() {
  return (
    <div className="flex h-screen flex-col overflow-hidden bg-white font-['Open_Sans','Noto_Sans',sans-serif] text-[14px] text-black">
      <header className="flex h-[29px] shrink-0 items-center pl-[3px]">
        <Logo />
        <h1 className="ml-[5px] flex-1 font-['Noto_Sans','Open_Sans',sans-serif]">gvSIG 2.5.0.2930 final : Sin título</h1>
        <div className="flex items-center">
          <button type="button" aria-label="Minimizar" className="flex w-[58px] justify-center">
            <svg viewBox="0 0 12 12" className="h-[12px] w-[12px]" fill="none"><path d="M0 5.500h12" stroke="#000" /></svg>
          </button>
          <button type="button" aria-label="Restaurar" className="flex w-[58px] justify-center">
            <svg viewBox="0 0 12 12" className="h-[12px] w-[12px]" fill="none">
              <path d="M.5 2.500h9v9h-9zM2.500 2V.5h9v9H10" stroke="#000" />
            </svg>
          </button>
          <button type="button" aria-label="Cerrar" className="flex w-[62px] justify-center">
            <svg viewBox="0 0 12 12" className="h-[12px] w-[12px]" fill="none"><path d="M0 0l12 12M12 0L0 12" stroke="#000" strokeWidth="1.100" /></svg>
          </button>
        </div>
      </header>
      <MenuBar />
      <Toolbar />
      <InnerWindow />
      <StatusBar />
    </div>
  );
}
